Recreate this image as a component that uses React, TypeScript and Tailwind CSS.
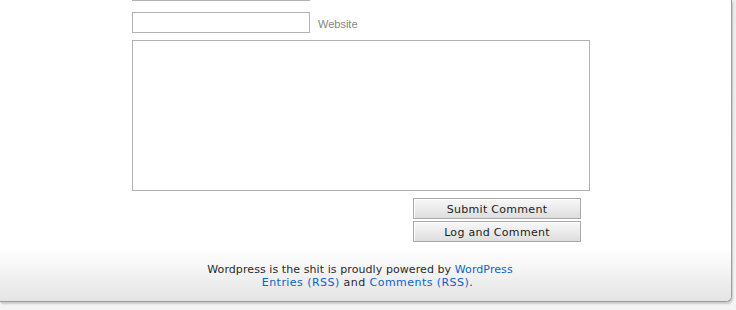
import React from "react";

const verdana = { fontFamily: '"DejaVu Sans", Verdana, sans-serif' };

export default function App() {
  return (
    <div className="w-[736px] h-[310px] bg-[linear-gradient(to_bottom,#ededed,#f4f4f4)] overflow-hidden">
      <div className="w-[732px] h-[302px] bg-white border-r border-b border-[#9c9c9c] rounded-br-[6px] shadow-[1px_2px_2px_rgba(0,0,0,0.18)] flex flex-col overflow-hidden">
        <div className="flex flex-col pl-[132px] h-[250px]">
          <div className="w-[178px] h-px bg-[#b2b2b2]" />
          <div className="flex items-center mt-[11px]">
            <input
              type="text"
              className="w-[178px] h-[21px] border border-[#b2b2b2] bg-white outline-none"
            />
            <label
              className="ml-[8px] pt-[3px] text-[11px] text-[#858585]"
              style={{ fontFamily: '"Liberation Sans", Arial, sans-serif' }}
            >
              Website
            </label>
          </div>
          <textarea className="mt-[7px] w-[458px] h-[151px] border border-[#b2b2b2] bg-white outline-none resize-none" />
          <div className="flex flex-col gap-[2px] mt-[7px] ml-[281px] w-[168px]">
            <button
              className="h-[21px] pt-[1px] border border-[#a8a8a8] bg-[linear-gradient(to_bottom,#f8f8f8,#dedede)] shadow-[inset_1px_1px_0_#ffffff] text-[11px] tracking-[0.3px] text-[#1c1c1c] leading-none"
              style={verdana}
            >
              Submit Comment
            </button>
            <button
              className="h-[21px] pt-[1px] border border-[#a8a8a8] bg-[linear-gradient(to_bottom,#f8f8f8,#dedede)] shadow-[inset_1px_1px_0_#ffffff] text-[11px] tracking-[0.3px] text-[#1c1c1c] leading-none"
              style={verdana}
            >
              Log and Comment
            </button>
          </div>
        </div>
        <div
          className="flex-1 bg-[linear-gradient(to_bottom,#ffffff,#e4e4e4)] pt-[13px] pr-[4px] text-center text-[11px] leading-[13px] text-[#2a2a2a]"
          style={verdana}
        >
          <p className="pr-[7px] tracking-[0.08px]">
            Wordpress is the shit is proudly powered by{" "}
            <a className="text-[#0a63c9]">WordPress</a>
          </p>
          <p className="pl-[8px] tracking-[0.45px]">
            <a className="text-[#0a63c9]">Entries (RSS)</a> and{" "}
            <a className="text-[#0a63c9]">Comments (RSS)</a>.
          </p>
        </div>
      </div>
    </div>
  );
}
